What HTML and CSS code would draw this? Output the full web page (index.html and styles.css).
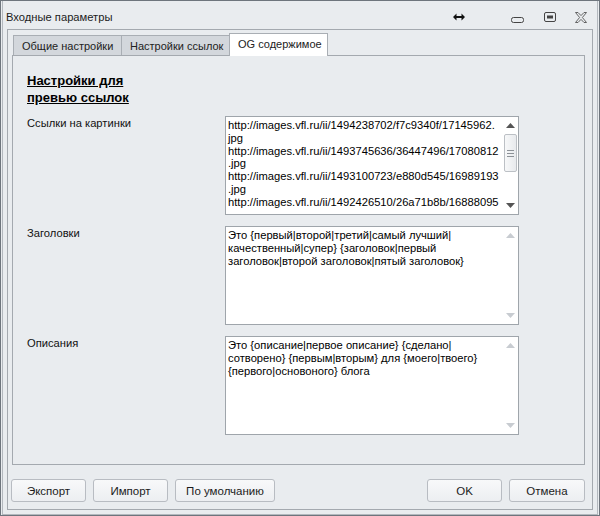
FILE: index.html
```html
<!DOCTYPE html>
<html lang="ru">
<head>
    <meta charset="UTF-8">
    <meta name="viewport" content="width=device-width, initial-scale=1.0">
    <title>Входные параметры</title>
    <link rel="stylesheet" href="styles.css">
</head>
<body>
    <div class="window">
        <div class="client">
            <div class="titlebar">
                <span class="title">Входные параметры</span>
                <svg class="tb-icon resize" width="12" height="8" viewBox="0 0 12 8">
                    <path d="M0 4 L3.5 0.5 L3.5 3 L8.5 3 L8.5 0.5 L12 4 L8.5 7.5 L8.5 5 L3.5 5 L3.5 7.5 Z" fill="#111"/>
                </svg>
                <svg class="tb-icon minimize" width="13" height="6" viewBox="0 0 13 6">
                    <rect x="0.5" y="0.5" width="12" height="5" rx="2" fill="none" stroke="#444"/>
                </svg>
                <svg class="tb-icon maximize" width="12" height="10" viewBox="0 0 12 10">
                    <rect x="0.5" y="0.5" width="11" height="9" rx="1.5" fill="none" stroke="#444"/>
                    <rect x="3" y="3.5" width="6" height="3" fill="#444"/>
                </svg>
                <svg class="tb-icon close" width="12" height="11" viewBox="0 0 12 11">
                    <path d="M0.5 0.5 L3 0.5 L6 3.6 L9 0.5 L11.5 0.5 L7.4 5.5 L11.5 10.5 L9 10.5 L6 7.4 L3 10.5 L0.5 10.5 L4.6 5.5 Z" fill="none" stroke="#555" stroke-width="0.9" stroke-linejoin="round"/>
                </svg>
            </div>

            <div class="frame">
                <div class="tabs">
                    <div class="tab tab-general">Общие настройки</div>
                    <div class="tab tab-links">Настройки ссылок</div>
                    <div class="tab tab-og active">OG содержимое</div>
                </div>

                <div class="panel">
                    <h2 class="section-title">Настройки для<br>превью ссылок</h2>

                    <div class="fields">
                        <div class="field-label">Ссылки на картинки</div>
                        <div class="memo">
                            <div class="memo-text">
                                <div>http://images.vfl.ru/ii/1494238702/f7c9340f/17145962.</div>
                                <div>jpg</div>
                                <div>http://images.vfl.ru/ii/1493745636/36447496/17080812</div>
                                <div>.jpg</div>
                                <div>http://images.vfl.ru/ii/1493100723/e880d545/16989193</div>
                                <div>.jpg</div>
                                <div>http://images.vfl.ru/ii/1492426510/26a71b8b/16888095</div>
                            </div>
                            <div class="memo-scroll">
                                <div class="arrow"><svg width="9" height="5" viewBox="0 0 9 5"><path d="M0 5 L4.5 0 L9 5 Z" fill="#555"/></svg></div>
                                <div class="thumb"><span></span><span></span><span></span></div>
                                <div class="track"></div>
                                <div class="arrow"><svg width="9" height="5" viewBox="0 0 9 5"><path d="M0 0 L9 0 L4.5 5 Z" fill="#555"/></svg></div>
                            </div>
                        </div>

                        <div class="field-label">Заголовки</div>
                        <div class="memo">
                            <div class="memo-text">
                                <div>Это {первый|второй|третий|самый лучший|</div>
                                <div>качественный|супер} {заголовок|первый</div>
                                <div>заголовок|второй заголовок|пятый заголовок}</div>
                            </div>
                            <div class="memo-scroll">
                                <div class="arrow"><svg width="9" height="5" viewBox="0 0 9 5"><path d="M0 5 L4.5 0 L9 5 Z" fill="#c8ccd1"/></svg></div>
                                <div class="track"></div>
                                <div class="arrow"><svg width="9" height="5" viewBox="0 0 9 5"><path d="M0 0 L9 0 L4.5 5 Z" fill="#c8ccd1"/></svg></div>
                            </div>
                        </div>

                        <div class="field-label">Описания</div>
                        <div class="memo">
                            <div class="memo-text">
                                <div>Это {описание|первое описание} {сделано|</div>
                                <div>сотворено} {первым|вторым} для {моего|твоего}</div>
                                <div>{первого|основоного} блога</div>
                            </div>
                            <div class="memo-scroll">
                                <div class="arrow"><svg width="9" height="5" viewBox="0 0 9 5"><path d="M0 5 L4.5 0 L9 5 Z" fill="#c8ccd1"/></svg></div>
                                <div class="track"></div>
                                <div class="arrow"><svg width="9" height="5" viewBox="0 0 9 5"><path d="M0 0 L9 0 L4.5 5 Z" fill="#c8ccd1"/></svg></div>
                            </div>
                        </div>
                    </div>
                </div>

                <div class="buttons">
                    <button class="btn btn-export">Экспорт</button>
                    <button class="btn btn-import">Импорт</button>
                    <button class="btn btn-default">По умолчанию</button>
                    <span class="spacer"></span>
                    <button class="btn btn-ok">OK</button>
                    <button class="btn btn-cancel">Отмена</button>
                </div>
            </div>
        </div>
    </div>
</body>
</html>
```

FILE: styles.css
```css
body {
    margin: 0;
    padding: 0;
    font-family: "Liberation Sans", Arial, sans-serif;
    font-size: 11px;
    color: #111;
    background-color: #e9ecef;
}

.window {
    width: 600px;
    height: 516px;
    box-sizing: border-box;
    border: 1px solid #6e757d;
    background-color: #e9ecef;
    overflow: hidden;
}

.client {
    height: 514px;
    box-sizing: border-box;
    margin: 0 1px;
    border: 1px solid #b3b8be;
    border-top: none;
    display: flex;
    flex-direction: column;
}

.titlebar {
    height: 28px;
    flex: none;
    display: flex;
    align-items: center;
    padding-left: 3px;
}

.title {
    flex: 1;
    padding-top: 4px;
    font-size: 11.2px;
    color: #1b1b1b;
}

.tb-icon {
    display: block;
    flex: none;
}

.resize {
    margin-right: 46px;
    margin-top: 4px;
}

.minimize {
    margin-right: 20px;
    margin-top: 9px;
}

.maximize {
    margin-right: 19px;
    margin-top: 4px;
}

.close {
    margin-right: 10px;
    margin-top: 4px;
}

.frame {
    flex: 1;
    margin: 0 4px 4px 4px;
    border: 1px solid #a4a9af;
    padding: 3px 7px 0 4px;
    display: flex;
    flex-direction: column;
}

.tabs {
    height: 22px;
    display: flex;
    align-items: flex-end;
    padding-left: 1px;
}

.tab {
    height: 19px;
    box-sizing: content-box;
    border: 1px solid #a9aeb4;
    border-bottom: none;
    background-color: #d3d7dc;
    line-height: 20px;
    padding: 0 8px;
    font-size: 11px;
    color: #222;
    white-space: nowrap;
}

.tab + .tab {
    border-left: none;
}

.tab-general {
    width: 91px;
}

.tab-links {
    width: 91px;
}

.tab.active {
    width: 81px;
    height: 22px;
    line-height: 20px;
    background-color: #fff;
    position: relative;
    z-index: 1;
    margin-bottom: -1px;
    border-left: 1px solid #a9aeb4;
    margin-left: -1px;
}

.panel {
    height: 410px;
    box-sizing: border-box;
    border: 1px solid #a4a9af;
    padding: 16px 0 0 14px;
}

.section-title {
    margin: 0 0 10px 0;
    font-size: 13px;
    line-height: 17px;
    font-weight: bold;
    text-decoration: underline;
    color: #000;
}

.fields {
    display: grid;
    grid-template-columns: 198px 294px;
    row-gap: 11px;
}

.field-label {
    line-height: 14px;
    font-size: 11.2px;
    color: #111;
}

.memo {
    height: 99px;
    box-sizing: border-box;
    border: 1px solid #9fa5ab;
    background-color: #fff;
    display: flex;
}

.memo-text {
    flex: 1;
    padding: 2px 0 0 2px;
    font-size: 11.2px;
    line-height: 12.8px;
    white-space: nowrap;
    overflow: hidden;
    color: #000;
}

.memo-scroll {
    width: 16px;
    flex: none;
    display: flex;
    flex-direction: column;
    align-items: center;
}

.arrow {
    height: 17px;
    display: flex;
    align-items: center;
    justify-content: center;
}

.arrow svg {
    display: block;
}

.thumb {
    width: 13px;
    height: 38px;
    box-sizing: border-box;
    border: 1px solid #bcc0c5;
    border-radius: 2px;
    background: linear-gradient(to right, #f7f8f9, #e8eaed);
    display: flex;
    flex-direction: column;
    align-items: center;
    justify-content: center;
    gap: 2px;
}

.thumb span {
    display: block;
    width: 7px;
    height: 1px;
    background-color: #8c9197;
}

.track {
    flex: 1;
}

.buttons {
    display: flex;
    gap: 7px;
    margin: 14px 0 0 -1px;
}

.spacer {
    flex: 1;
}

.btn {
    height: 23px;
    box-sizing: border-box;
    padding: 0;
    border: 1px solid #b8bcc2;
    border-radius: 3px;
    background: linear-gradient(to bottom, #f8f9fa, #eceef1);
    font-family: "Liberation Sans", Arial, sans-serif;
    font-size: 11.5px;
    color: #1b1b1b;
    cursor: pointer;
}

.btn-export,
.btn-import {
    width: 75px;
}

.btn-default {
    width: 100px;
}

.btn-ok {
    width: 75px;
}

.btn-cancel {
    width: 76px;
}
```
